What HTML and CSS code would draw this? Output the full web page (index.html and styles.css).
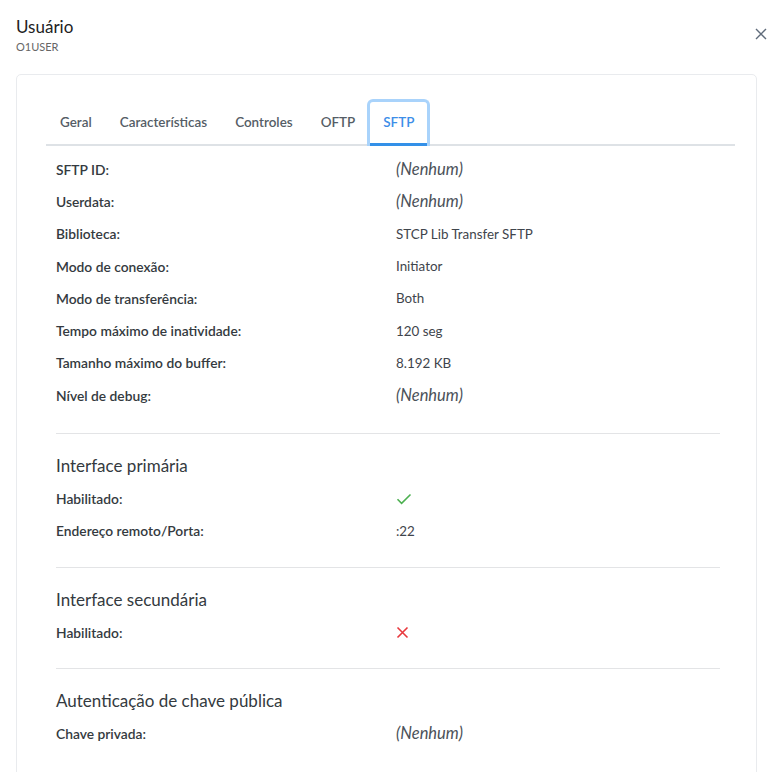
FILE: index.html
```html
<!DOCTYPE html>
<html lang="pt-BR">
  <head>
    <meta charset="UTF-8" />
    <meta name="viewport" content="width=device-width, initial-scale=1.0" />
    <title>Usuário</title>
    <link rel="stylesheet" href="styles.css">
  </head>
  <body>
    <div class="header">
      <div>
        <h1 class="title">Usuário</h1>
        <div class="subtitle">O1USER</div>
      </div>
      <button class="close" aria-label="Fechar">
        <svg width="12" height="12" viewBox="0 0 12 12">
          <path d="M1 1L11 11M11 1L1 11" stroke="#5f6b7a" stroke-width="1.4" fill="none" />
        </svg>
      </button>
    </div>

    <div class="card">
      <ul class="tabs">
        <li class="tab">Geral</li>
        <li class="tab">Características</li>
        <li class="tab">Controles</li>
        <li class="tab">OFTP</li>
        <li class="tab active">SFTP</li>
      </ul>

      <div class="panel">
        <div class="row"><span class="label">SFTP ID:</span><span class="value none">(Nenhum)</span></div>
        <div class="row"><span class="label">Userdata:</span><span class="value none">(Nenhum)</span></div>
        <div class="row"><span class="label">Biblioteca:</span><span class="value">STCP Lib Transfer SFTP</span></div>
        <div class="row"><span class="label">Modo de conexão:</span><span class="value">Initiator</span></div>
        <div class="row"><span class="label">Modo de transferência:</span><span class="value">Both</span></div>
        <div class="row"><span class="label">Tempo máximo de inatividade:</span><span class="value">120 seg</span></div>
        <div class="row"><span class="label">Tamanho máximo do buffer:</span><span class="value">8.192 KB</span></div>
        <div class="row"><span class="label">Nível de debug:</span><span class="value none">(Nenhum)</span></div>

        <div class="section">
          <h2>Interface primária</h2>
          <div class="row">
            <span class="label">Habilitado:</span>
            <span class="value">
              <svg width="16" height="12" viewBox="0 0 16 12">
                <path d="M1.5 6.2L5.6 10.3L14.5 1.5" stroke="#4cb050" stroke-width="1.6" fill="none" />
              </svg>
            </span>
          </div>
          <div class="row"><span class="label">Endereço remoto/Porta:</span><span class="value">:22</span></div>
        </div>

        <div class="section">
          <h2>Interface secundária</h2>
          <div class="row">
            <span class="label">Habilitado:</span>
            <span class="value">
              <svg width="13" height="13" viewBox="0 0 13 13">
                <path d="M1.5 1.5L11.5 11.5M11.5 1.5L1.5 11.5" stroke="#e8383d" stroke-width="1.6" fill="none" />
              </svg>
            </span>
          </div>
        </div>

        <div class="section">
          <h2>Autenticação de chave pública</h2>
          <div class="row"><span class="label">Chave privada:</span><span class="value none">(Nenhum)</span></div>
        </div>
      </div>
    </div>
  </body>
</html>
```

FILE: styles.css
```css
* {
  box-sizing: border-box;
  margin: 0;
  padding: 0;
}
body {
  background-color: white;
  color: #343a40;
  font-family: Lato, "Open Sans", sans-serif;
  font-size: 13.4px;
}
.header {
  display: flex;
  justify-content: space-between;
  align-items: flex-start;
  padding: 16px 10px 0 16px;
}
.title {
  font-size: 17px;
  font-weight: normal;
  line-height: 22px;
  color: #222;
}
.subtitle {
  font-size: 11px;
  line-height: 16px;
  margin-top: 1px;
  color: #666;
}
.close {
  border: none;
  background: none;
  margin-top: 12px;
  width: 12px;
  height: 12px;
  display: flex;
}
.card {
  margin: 19px 20px 0 16px;
  height: 720px;
  border: 1px solid #e9ebee;
  border-radius: 5px;
  padding: 24px 21px 0 29px;
}
.tabs {
  display: flex;
  list-style: none;
  border-bottom: 2px solid #dee2e6;
  height: 47px;
}
.tab {
  padding: 0 12px;
  border: 2px solid transparent;
  border-bottom: none;
  height: 47px;
  line-height: 43px;
  font-size: 13.45px;
  font-weight: 600;
  color: #555d66;
}
/* the selected tab also carries the focus ring */
.tab.active {
  color: #3d8ee8;
  border: 3px solid #a9d3fb;
  border-bottom: none;
  border-radius: 6px 6px 0 0;
  margin: 0 -2px;
  padding: 0 13px;
  line-height: 41px;
  box-shadow: inset 0 -3px 0 #3390e8;
}
.panel {
  padding: 7px 15px 0 10px;
}
.row {
  display: flex;
  align-items: center;
  height: 32.3px;
}
.label {
  width: 340px;
  font-size: 13.8px;
  font-weight: 600;
  color: #343a40;
}
.value {
  display: flex;
  align-items: center;
  color: #3f454c;
}
.value.none {
  font-style: italic;
  font-size: 16.5px;
  color: #4b5159;
}
.section {
  border-top: 1px solid #e3e4e6;
  margin-top: 22px;
  padding-top: 16px;
}
.section + .section {
  margin-top: 20px;
}
.section h2 {
  font-size: 17px;
  font-weight: normal;
  color: #343a40;
  line-height: 32px;
}
```
